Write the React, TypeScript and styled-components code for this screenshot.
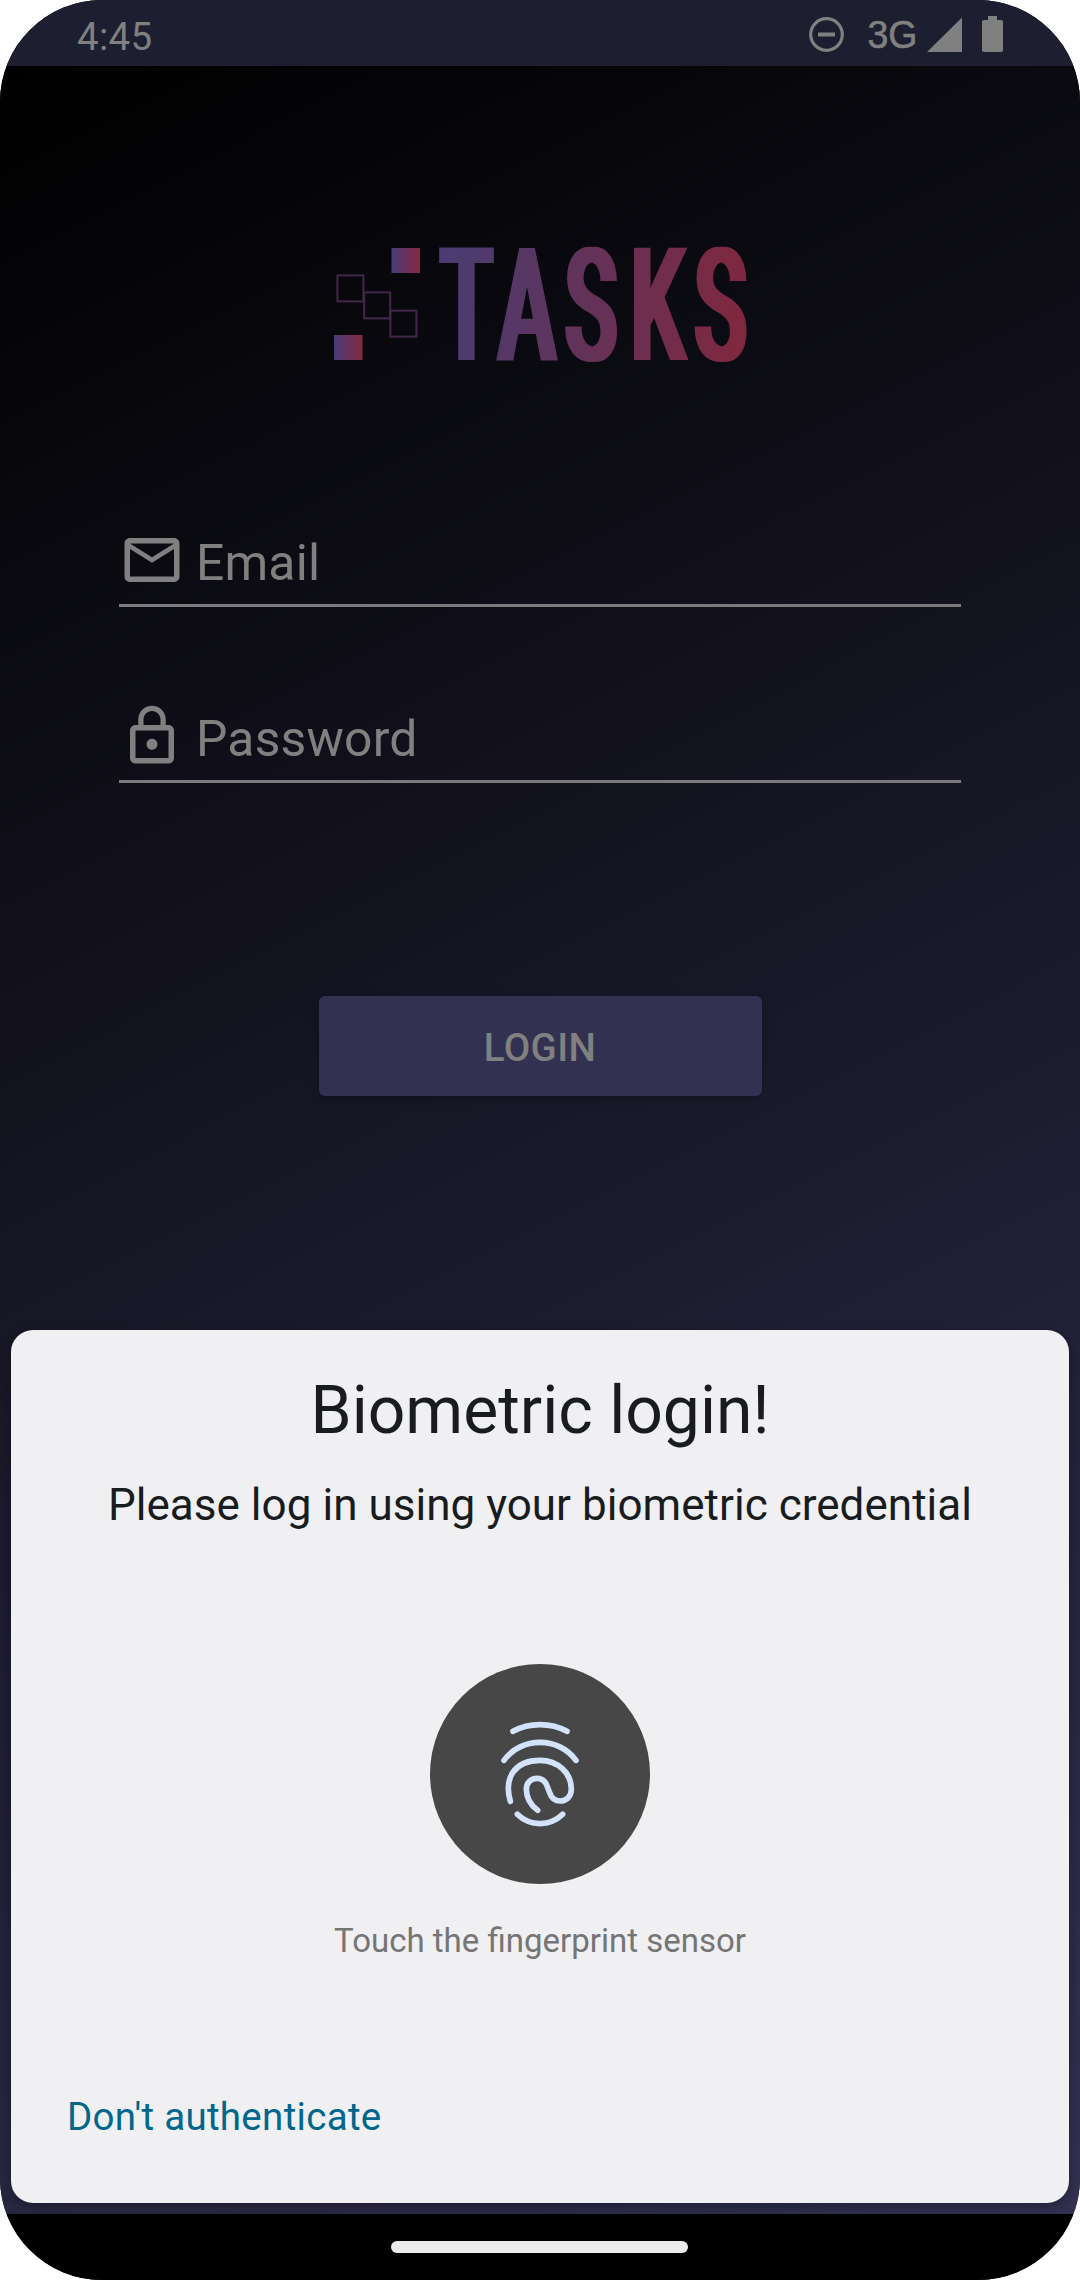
import React from 'react';
import styled, { createGlobalStyle } from 'styled-components';

const GlobalStyle = createGlobalStyle`
  * { box-sizing: border-box; }
  body { margin: 0; background: #fff; font-family: Roboto, 'Noto Sans', sans-serif; }
`;

const Phone = styled.div`
  width: 1080px;
  height: 2280px;
  border-radius: 102px;
  overflow: hidden;
  display: flex;
  flex-direction: column;
  background: #000;
`;

const StatusBar = styled.header`
  height: 66px;
  flex: none;
  display: flex;
  justify-content: space-between;
  padding: 0 74px 0 77px;
  background: #1d1e2f;
  color: #808080;
`;

const Clock = styled.span`
  font-size: 38.5px;
  line-height: 45px;
  padding-top: 14px;
  letter-spacing: 0.3px;
`;

const StatusIcons = styled.svg`
  display: block;
  width: 200px;
  height: 66px;
`;

const Screen = styled.main`
  height: 2148px;
  flex: none;
  display: flex;
  flex-direction: column;
  align-items: center;
  background: linear-gradient(153.3deg, #000 0%, #323152 100%);
`;

const Logo = styled.svg`
  display: block;
  width: 440px;
  height: 230px;
  margin-top: 124px;
`;

const Form = styled.form`
  width: 842px;
  margin-top: 59px;
  display: flex;
  flex-direction: column;
  gap: 48px;
`;

const Field = styled.label`
  height: 128px;
  display: flex;
  align-items: center;
  border-bottom: 3px solid #7b7b7e;
  padding-top: 37px;
  color: #808080;
`;

const FieldIcon = styled.svg`
  width: 66px;
  height: 66px;
  flex: none;
  fill: #808080;
  margin-right: 11px;
`;

const Placeholder = styled.span`
  padding-top: 6px;
  font-size: 49.8px;
  line-height: 58px;
  letter-spacing: 0.2px;
`;

const LoginButton = styled.button`
  width: 443px;
  height: 100px;
  flex: none;
  margin-top: 213px;
  border: 0;
  border-radius: 6px;
  background: #333151;
  color: #808080;
  font: 500 38.5px/46px Roboto, sans-serif;
  letter-spacing: 0.4px;
  padding: 3px 0 0;
  box-shadow: 0 3px 8px rgba(0, 0, 0, 0.25);
`;

const Sheet = styled.section`
  width: 1058px;
  height: 873px;
  flex: none;
  margin: auto 0 11px;
  border-radius: 22px;
  background: #f0f0f2;
  box-shadow: 0 3px 12px rgba(0, 0, 0, 0.35);
  display: flex;
  flex-direction: column;
  align-items: center;
  color: #191c1e;
`;

const Title = styled.h1`
  margin: 42px 0 0;
  font-size: 66px;
  line-height: 78px;
  font-weight: 400;
`;

const Subtitle = styled.p`
  margin: 29px 0 0;
  font-size: 44px;
  line-height: 52px;
  letter-spacing: 0.03px;
`;

const SensorBadge = styled.div`
  width: 220px;
  height: 220px;
  margin-top: 133px;
  border-radius: 50%;
  background: #474747;
`;

const Hint = styled.p`
  margin: 37px 0 0;
  font-size: 33px;
  line-height: 39px;
  color: #757575;
`;

const CancelAction = styled.a`
  align-self: flex-start;
  margin: 134px 0 0 56px;
  font-size: 38.5px;
  line-height: 45px;
  letter-spacing: 0.3px;
  color: #00668b;
`;

const NavBar = styled.footer`
  height: 66px;
  flex: none;
  display: flex;
  justify-content: center;
  align-items: center;
  padding-right: 1px;
  background: #000;
`;

const NavHandle = styled.div`
  width: 297px;
  height: 12px;
  border-radius: 6px;
  background: #ececec;
`;

function StatusGlyphs() {
  return (
    <StatusIcons viewBox="806 0 200 66" fill="#808080">
      <circle cx="826.5" cy="34.5" r="15.8" fill="none" stroke="#808080" strokeWidth="3.2" />
      <rect x="818" y="32.5" width="17" height="4" />
      <text x="867.5" y="48" fontFamily="'Liberation Sans', sans-serif" fontSize="39.5"
        textLength="50" lengthAdjust="spacingAndGlyphs" stroke="#808080" strokeWidth="0.6">3G</text>
      <path d="M927 52L962 17.5V52z" />
      <path d="M988 16h9v4h4a2 2 0 0 1 2 2v28a2 2 0 0 1-2 2h-17a2 2 0 0 1-2-2V22a2 2 0 0 1 2-2h4z" />
    </StatusIcons>
  );
}

const CONDENSE = 0.545;
const letterCenters = [466.5, 527, 591, 658, 720.5];

function TasksLogo() {
  return (
    <Logo viewBox="320 190 440 230">
      <defs>
        <linearGradient id="word" gradientUnits="userSpaceOnUse"
          x1={439 / CONDENSE} y1="270" x2={745 / CONDENSE} y2="350">
          <stop offset="0" stopColor="#483c72" />
          <stop offset="1" stopColor="#80273d" />
        </linearGradient>
        <linearGradient id="tile">
          <stop offset="0" stopColor="#483c78" />
          <stop offset="1" stopColor="#86283f" />
        </linearGradient>
        <filter id="heavy" filterUnits="userSpaceOnUse" x="420" y="230" width="340" height="150"
          colorInterpolationFilters="sRGB">
          <feMorphology operator="dilate" radius="3 0" />
        </filter>
      </defs>
      <rect x="391.5" y="248" width="28.5" height="25" fill="url(#tile)" />
      <rect x="334" y="335" width="28.5" height="25" fill="url(#tile)" />
      <g fill="none" stroke="#412849" strokeWidth="2">
        <rect x="337.4" y="275.4" width="26" height="26" />
        <rect x="364.2" y="292.4" width="26" height="26" />
        <rect x="390.4" y="310.6" width="26" height="26" />
      </g>
      <g filter="url(#heavy)">
        <text transform={`scale(${CONDENSE} 1)`} x={letterCenters.map((c) => c / CONDENSE).join(' ')} y="360"
          textAnchor="middle" fill="url(#word)" fontFamily="Roboto, sans-serif" fontWeight="500"
          fontSize="158">TASKS</text>
      </g>
    </Logo>
  );
}

export default function App() {
  return (
    <>
      <GlobalStyle />
      <Phone>
        <StatusBar>
          <Clock>4:45</Clock>
          <StatusGlyphs />
        </StatusBar>
        <Screen>
          <TasksLogo />
          <Form>
            <Field>
              <FieldIcon viewBox="0 0 24 24">
                <path d="M22 6c0-1.100-.9-2-2-2H4c-1.100 0-2 .9-2 2v12c0 1.100.9 2 2 2h16c1.100 0 2-.9 2-2V6zm-2 0l-8 5-8-5h16zm0 12H4V8l8 5 8-5v10z" />
              </FieldIcon>
              <Placeholder>Email</Placeholder>
            </Field>
            <Field>
              <FieldIcon viewBox="0 0 24 24">
                <path d="M12 17c1.100 0 2-.9 2-2s-.9-2-2-2-2 .9-2 2 .9 2 2 2zm6-9h-1V6c0-2.760-2.240-5-5-5S7 3.240 7 6v2H6c-1.100 0-2 .9-2 2v10c0 1.100.9 2 2 2h12c1.100 0 2-.9 2-2V10c0-1.100-.9-2-2-2zM8.900 6c0-1.710 1.390-3.100 3.100-3.100s3.100 1.390 3.100 3.100v2H8.900V6zM18 20H6V10h12v10z" />
              </FieldIcon>
              <Placeholder>Password</Placeholder>
            </Field>
          </Form>
          <LoginButton type="button">LOGIN</LoginButton>
          <Sheet>
            <Title>Biometric login!</Title>
            <Subtitle>Please log in using your biometric credential</Subtitle>
            <SensorBadge>
              <svg width="220" height="220" viewBox="30 42 660 660" fill="none" stroke="#d3e3fd"
                strokeWidth="17" strokeLinecap="round" strokeLinejoin="round">
                <path d="M279 244C328 217 392 217 441 244" />
                <path d="M252 331C304 259 416 259 468 331" />
                <path d="M271 454C251 385 283 331 360 331C413 331 454 369 454 417C454 439 440 453 421 453C404 453 394 444 389 428L380 405C374 391 365 385 351 385C332 385 319 399 319 417C319 444 333 466 353 481" />
                <path d="M292 493C330 530 390 530 428 493" />
              </svg>
            </SensorBadge>
            <Hint>Touch the fingerprint sensor</Hint>
            <CancelAction>Don't authenticate</CancelAction>
          </Sheet>
        </Screen>
        <NavBar>
          <NavHandle />
        </NavBar>
      </Phone>
    </>
  );
}
